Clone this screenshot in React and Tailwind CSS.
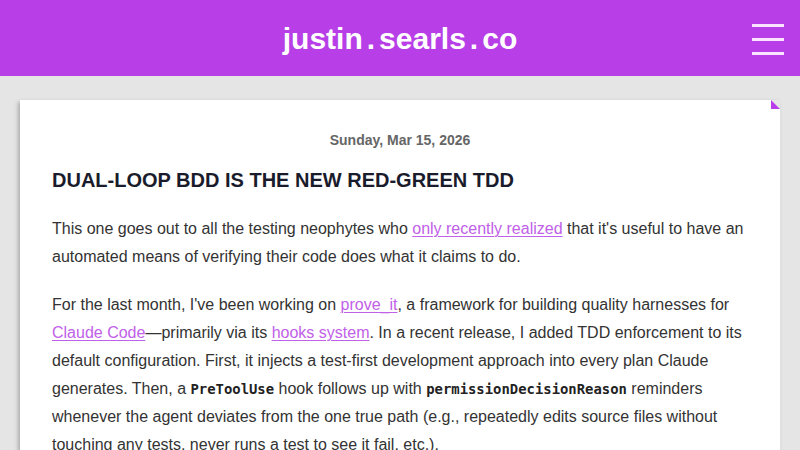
const Code = ({ children }) => (
  <code className="font-['DejaVu_Sans_Mono',monospace] text-[13.9px] font-bold text-[#222]">{children}</code>
);

const A = ({ children }) => (
  <a href="#" className="text-[#c160e8] underline decoration-1 underline-offset-2">{children}</a>
);

const App = () => {
  return (
    <div className="min-h-[450px] bg-[#e5e5e5] font-['Liberation_Sans',Arial,sans-serif]">
      <header className="relative flex h-[76px] items-center justify-center bg-[#b83fe7]">
        <h1 className="text-[30px] font-bold text-white">
          justin<span className="mx-[4px]">.</span>searls<span className="mx-[4px]">.</span>co
        </h1>
        <button className="absolute right-[16px] top-[24px] flex w-[32px] flex-col gap-[11px]">
          <span className="h-[3px] w-full bg-[#fbe4ff]" />
          <span className="h-[3px] w-full bg-[#fbe4ff]" />
          <span className="h-[3px] w-full bg-[#fbe4ff]" />
        </button>
      </header>

      <main className="px-[20px] pt-[24px]">
        <article className="relative bg-white px-[32px] pt-[30px] pb-[24px] shadow-[-2px_2px_4px_rgba(0,0,0,0.25)]">
          <svg className="absolute right-0 top-0" width="9" height="9" viewBox="0 0 9 9">
            <polygon points="0,0 9,0 9,9" fill="#e5e5e5" />
            <polygon points="0,0 0,9 9,9" fill="#b83fe7" />
          </svg>
          <div className="text-center text-[14px] font-bold leading-[20px] text-[#666]">
            Sunday, Mar 15, 2026
          </div>
          <h2 className="mt-[17px] text-[20px] font-bold uppercase leading-[26px] text-[#1a1c2c]">
            Dual-Loop BDD is the new Red-Green TDD
          </h2>
          <p className="mt-[22px] text-[16px] leading-[28px] text-[#333]">
            This one goes out to all the testing neophytes who <A>only recently realized</A> that it's useful to have an automated means of verifying their code does what it claims to do.
          </p>
          <p className="mt-[20px] text-[16px] leading-[28px] text-[#333]">
            For the last month, I've been working on <A>prove_it</A>, a framework for building quality harnesses for <A>Claude Code</A>—primarily via its <A>hooks system</A>. In a recent release, I added TDD enforcement to its default configuration. First, it injects a test-first development approach into every plan Claude generates. Then, a <Code>PreToolUse</Code> hook follows up with <Code>permissionDecisionReason</Code> reminders whenever the agent deviates from the one true path (e.g., repeatedly edits source files without touching any tests, never runs a test to see it fail, etc.).
          </p>
        </article>
      </main>
    </div>
  );
};

export default App;
